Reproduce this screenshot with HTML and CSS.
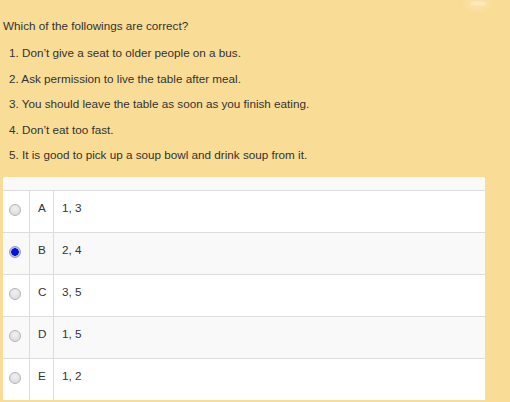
FILE: index.html
```html
<!DOCTYPE html>
<html>
<head>
<meta charset="utf-8">
<link rel="stylesheet" href="styles.css">
</head>
<body>
<div class="glow"></div>
<div class="question">Which of the followings are correct?</div>
<div class="items">
  <div class="item">1. Don’t give a seat to older people on a bus.</div>
  <div class="item">2. Ask permission to live the table after meal.</div>
  <div class="item">3. You should leave the table as soon as you finish eating.</div>
  <div class="item">4. Don’t eat too fast.</div>
  <div class="item">5. It is good to pick up a soup bowl and drink soup from it.</div>
</div>
<div class="table">
  <div class="head"></div>
  <div class="row">
    <div class="c-radio"><span class="radio"></span></div>
    <div class="c-letter">A</div>
    <div class="c-val">1, 3</div>
  </div>
  <div class="row alt">
    <div class="c-radio"><span class="radio checked"></span></div>
    <div class="c-letter">B</div>
    <div class="c-val">2, 4</div>
  </div>
  <div class="row">
    <div class="c-radio"><span class="radio"></span></div>
    <div class="c-letter">C</div>
    <div class="c-val">3, 5</div>
  </div>
  <div class="row alt">
    <div class="c-radio"><span class="radio"></span></div>
    <div class="c-letter">D</div>
    <div class="c-val">1, 5</div>
  </div>
  <div class="row last">
    <div class="c-radio"><span class="radio"></span></div>
    <div class="c-letter">E</div>
    <div class="c-val">1, 2</div>
  </div>
</div>
</body>
</html>
```
FILE: styles.css
```css
html, body {
  margin: 0;
  padding: 0;
}
body {
  background: #f9dc95;
  font-family: "Liberation Sans", Arial, sans-serif;
  font-size: 11.7px;
  color: #333;
  width: 510px;
  height: 402px;
  overflow: hidden;
  position: relative;
}
.glow {
  position: absolute;
  left: 470px;
  top: 1px;
  width: 16px;
  height: 5px;
  border-radius: 50%;
  background: rgba(255, 240, 210, 0.6);
  box-shadow: 0 0 6px 4px rgba(255, 236, 200, 0.4);
}
.question {
  padding: 18px 0 0 3px;
  line-height: 16px;
}
.items {
  margin-top: 6px;
  padding-left: 9px;
}
.item {
  line-height: 25.6px;
}
.table {
  margin: 9px 0 0 3px;
  width: 482px;
  background: #fff;
  border-radius: 3px 3px 0 0;
}
.head {
  height: 13px;
  background: #f9f9f9;
  border-bottom: 1px solid #ddd;
  border-radius: 3px 3px 0 0;
}
.row {
  display: flex;
  height: 41px;
  border-bottom: 1px solid #ddd;
  background: #fff;
}
.row.alt {
  background: #f9f9f9;
}
.row.last {
  border-bottom: none;
}
.c-radio {
  width: 26px;
  border-right: 1px solid #ddd;
  position: relative;
}
.c-letter {
  width: 15px;
  padding: 8px 0 0 8px;
  line-height: 17px;
  border-right: 1px solid #ddd;
}
.c-val {
  flex: 1;
  padding: 8px 0 0 8px;
  line-height: 17px;
}
.radio {
  position: absolute;
  left: 6px;
  top: 13px;
  width: 10px;
  height: 10px;
  border-radius: 50%;
  border: 1px solid #b5b5b5;
  background: radial-gradient(circle at 50% 35%, #f2f2f2 0%, #d6d6d6 100%);
}
.radio.checked {
  background: radial-gradient(circle, #0a14e6 0, #0010e0 3.5px, #b9bde0 4px, #d8d8d8 100%);
  border-color: #9a9aa8;
}
```
